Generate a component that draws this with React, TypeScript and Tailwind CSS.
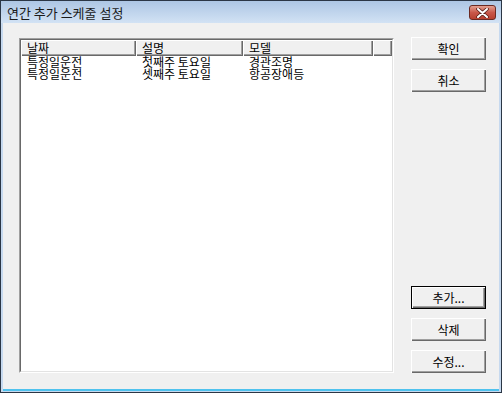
import React from 'react'

const rows = [
  { date: '특정일운전', desc: '첫째주 토요일', model: '경관조명' },
  { date: '특정일운전', desc: '셋째주 토요일', model: '항공장애등' },
]

const font = { fontFamily: '"Noto Sans CJK KR", "Noto Sans", sans-serif' }

function Btn({ label, primary }: { label: string; primary?: boolean }) {
  return (
    <button
      className={
        'h-[23px] w-[75px] flex items-center justify-center text-[12px] text-black bg-[#f0f0f0] ' +
        (primary
          ? 'border border-black shadow-[inset_1px_1px_0_#fff,inset_-1px_-1px_0_#696969,inset_-2px_-2px_0_#a0a0a0]'
          : 'shadow-[inset_1px_1px_0_#fff,inset_-1px_-1px_0_#696969,inset_-2px_-2px_0_#a0a0a0]')
      }
    >
      {label}
    </button>
  )
}

function HeadCell({ label, w }: { label: string; w: string }) {
  return (
    <div
      className={`${w} h-full shrink-0 flex items-center pl-[6px] bg-[#f0f0f0] shadow-[inset_1px_1px_0_#fff,inset_-1px_-1px_0_#696969,inset_-2px_-2px_0_#a0a0a0]`}
    >
      {label}
    </div>
  )
}

export default function App() {
  return (
    <div className="w-[502px] h-[393px] bg-[#2b3645] p-px" style={font}>
      <div className="w-full h-full flex flex-col bg-[#c6d9ef]">
        {/* title bar */}
        <div className="h-[22px] shrink-0 flex items-center justify-between pl-[6px] pr-[5px] bg-gradient-to-b from-[#adc6e4] to-[#d2e2f4]">
          <span className="text-[13px] text-[#1a1a1a] pt-px">연간 추가 스케줄 설정</span>
          <div className="w-[27px] h-[15px] mt-px rounded-[3px] border border-[#6b2a22] bg-gradient-to-b from-[#e3a092] via-[#c9584a] to-[#b8402f] flex items-center justify-center">
            <svg width="13" height="10" viewBox="0 0 13 10">
              <path d="M2 1 L11 9 M11 1 L2 9" stroke="#5a2018" strokeWidth="3.6" strokeLinecap="round" />
              <path d="M2 1 L11 9 M11 1 L2 9" stroke="#ffffff" strokeWidth="2" strokeLinecap="round" />
            </svg>
          </div>
        </div>

        {/* client area */}
        <div className="flex-1 mx-[2px] mb-px border-b-2 border-[#4fc2ee] bg-[#f0f0f0] flex pt-[15px] pl-[16px] text-[12px] leading-none text-black">
          {/* list view */}
          <div className="w-[375px] h-[335px] border-t border-l border-[#a0a0a0] border-b border-r border-b-white border-r-white">
            <div className="w-full h-full border border-[#696969] border-b-[#e3e3e3] border-r-[#e3e3e3] bg-white text-[12px]">
              <div className="h-[16px] flex">
                <HeadCell label="날짜" w="w-[115px]" />
                <HeadCell label="설명" w="w-[107px]" />
                <HeadCell label="모델" w="w-[130px]" />
                <div className="flex-1 h-full bg-[#f0f0f0] shadow-[inset_1px_1px_0_#fff,inset_-1px_-1px_0_#696969,inset_-2px_-2px_0_#a0a0a0]" />
              </div>
              <div>
                {rows.map((r, i) => (
                  <div key={i} className="h-[12px] leading-[12px] flex items-center">
                    <span className="w-[115px] pl-[6px] shrink-0">{r.date}</span>
                    <span className="w-[107px] pl-[6px] shrink-0">{r.desc}</span>
                    <span className="w-[130px] pl-[6px] shrink-0">{r.model}</span>
                  </div>
                ))}
              </div>
            </div>
          </div>

          {/* buttons */}
          <div className="ml-[17px] -mt-[1px] h-[336px] flex flex-col justify-between">
            <div className="flex flex-col gap-[9px]">
              <Btn label="확인" />
              <Btn label="취소" />
            </div>
            <div className="flex flex-col gap-[9px]">
              <Btn label="추가..." primary />
              <Btn label="삭제" />
              <Btn label="수정..." />
            </div>
          </div>
        </div>
      </div>
    </div>
  )
}
